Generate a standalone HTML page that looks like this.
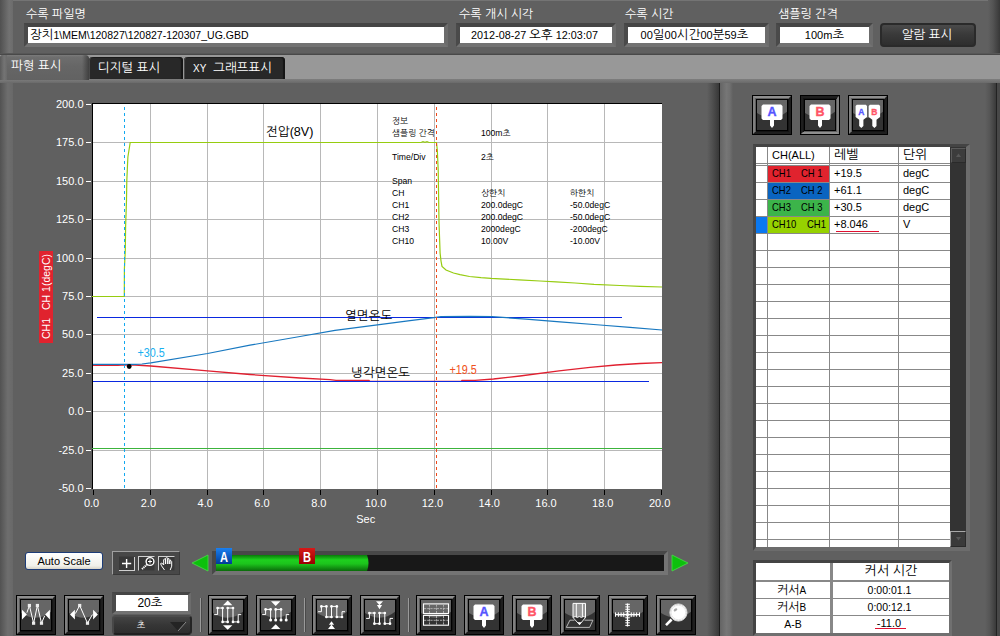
<!DOCTYPE html>
<html><head><meta charset="utf-8"><title>파형 표시</title>
<style>
html,body{margin:0;padding:0;background:#606060;}
body{width:1000px;height:636px;position:relative;overflow:hidden;font-family:"Liberation Sans","NanumGothic",sans-serif;font-size:12px;color:#fff;}
.abs{position:absolute;}
.t11{font-size:11px;line-height:13px;white-space:nowrap;}
.nar{font-size:10.5px;transform:scaleX(0.9);transform-origin:0 0;}
.t12{font-size:12px;line-height:14px;white-space:nowrap;}
.lbl{position:absolute;font-size:12px;line-height:14px;white-space:nowrap;color:#fff;}
.inset{position:absolute;box-sizing:border-box;background:#fff;border-style:solid;border-width:4px;border-color:#454545 #6c6c6c #727272 #4a4a4a;color:#000;font-size:11px;line-height:17px;white-space:nowrap;overflow:hidden;}
.btn{position:absolute;width:40px;height:40px;box-sizing:border-box;border:1px solid #000;background:#000;}
.btn:before{content:"";position:absolute;left:0;top:0;width:38px;height:38px;box-sizing:border-box;border-style:solid;border-width:2px;border-color:#8e8e8e #1e1e1e #1e1e1e #808080;box-shadow:inset 1px 1px 0 #5e5e5e, inset -1px -1px 0 #141414;}
.btn.pressed:before{border-color:#1e1e1e #808080 #8e8e8e #1e1e1e;box-shadow:inset 1px 1px 0 #141414, inset -1px -1px 0 #5e5e5e;}
.btn .face{position:absolute;left:4px;top:4px;}
.k{font-size:12.5px;}
.sep{position:absolute;width:2px;height:34px;top:598px;background:linear-gradient(90deg,#9a9a9a 0 50%,#4a4a4a 50% 100%);}
</style></head><body>
<!-- top bar -->
<div class="abs" style="left:0;top:0;width:1000px;height:55px;background:linear-gradient(#606060 52px,#4e4e4e 53px,#3a3a3a 55px);border-top:1px solid #747474;box-sizing:border-box"></div>
<div class="abs" style="left:0;top:0;width:13px;height:53px;background:linear-gradient(90deg,#505050,#727272 70%,#6c6c6c)"></div>
<div class="abs" style="left:988px;top:0;width:12px;height:53px;background:linear-gradient(90deg,#606060,#545454 40%,#383838)"></div>
<div class="lbl" style="left:26px;top:7px">수록 파일명</div>
<div class="inset" style="left:24px;top:23px;width:424px;height:24px;padding-left:2px;font-size:10.5px"><span class="k">장치</span>1\MEM\120827\120827-120307_UG.GBD</div>
<div class="lbl" style="left:459px;top:7px">수록 개시 시각</div>
<div class="inset" style="left:456px;top:23px;width:160px;height:24px;text-align:center;padding-right:3px;font-size:10.8px">2012-08-27 <span class="k">오후</span> 12:03:07</div>
<div class="lbl" style="left:625px;top:7px">수록 시간</div>
<div class="inset" style="left:624px;top:23px;width:145px;height:24px;text-align:center;padding-right:4px">00<span class="k">일</span>00<span class="k">시간</span>00<span class="k">분</span>59<span class="k">초</span></div>
<div class="lbl" style="left:778px;top:7px">샘플링 간격</div>
<div class="inset" style="left:776px;top:23px;width:97px;height:24px;text-align:center">100m<span class="k">초</span></div>
<div class="abs" style="left:880px;top:23px;width:96px;height:24px;box-sizing:border-box;background:linear-gradient(#4a4a4a,#3a3a3a 45%,#2e2e2e);border:2px solid #2a2a2a;border-radius:4px;text-align:center;font-size:12.5px;line-height:20px;padding-right:2px">알람 표시</div>
<!-- tab strip -->
<div class="abs" style="left:0;top:55px;width:1000px;height:24px;background:#989898"></div>
<div class="abs" style="left:0;top:79px;width:1000px;height:4px;background:linear-gradient(#7e7e7e,#6a6a6a)"></div>
<div class="abs" style="left:0;top:55px;width:89px;height:25px;background:linear-gradient(#7c7c7c,#6e6e6e 2px,#666 45%,#626262);border-radius:3px 4px 0 0"></div><div class="abs" style="left:0;top:55px;width:7px;height:25px;background:linear-gradient(90deg,#5a5a5a,#747474 60%,#6a6a6a);border-radius:3px 0 0 0"></div><div class="abs" style="left:82px;top:55px;width:7px;height:25px;background:linear-gradient(90deg,rgba(70,70,70,0),rgba(60,60,60,0.9));border-radius:0 4px 0 0"></div>
<div class="lbl" style="left:11px;top:59px;font-size:12.5px">파형 표시</div>
<div class="abs" style="left:89px;top:57px;width:94px;height:22px;background:#282828;border-radius:4px 4px 0 0;box-shadow:inset 1px 0 0 #4a4a4a, inset 0 1px 0 #1a1a1a, inset -2px 0 1px #141414"></div>
<div class="lbl" style="left:98px;top:61px;font-size:12.5px">디지털 표시</div>
<div class="abs" style="left:184px;top:57px;width:101px;height:22px;background:#282828;border-radius:4px 4px 0 0;box-shadow:inset 1px 0 0 #4a4a4a, inset 0 1px 0 #1a1a1a, inset -2px 0 1px #141414"></div>
<div class="lbl" style="left:193px;top:61px;font-size:12.5px"><span style="font-size:10px">XY</span>&nbsp; 그래프표시</div>
<!-- main panels -->
<div class="abs" style="left:0;top:83px;width:720px;height:553px;background:#606060"></div>
<div class="abs" style="left:0;top:83px;width:13px;height:553px;background:linear-gradient(90deg,#525252,#6e6e6e 60%,#686868)"></div>
<div class="abs" style="left:707px;top:83px;width:13px;height:553px;background:linear-gradient(90deg,#606060,#505050 40%,#383838 92%,#1c1c1c 93%)"></div>
<div class="abs" style="left:720px;top:83px;width:280px;height:553px;background:#606060"></div>
<div class="abs" style="left:720px;top:83px;width:13px;height:553px;background:linear-gradient(90deg,#646464,#767676 50%,#707070 75%,#606060)"></div>
<div class="abs" style="left:985px;top:83px;width:15px;height:553px;background:linear-gradient(90deg,#606060,#565656 30%,#3a3a3a 73%,#222 74%,#222 80%,#484848 81%)"></div>
<svg class="abs" style="left:0;top:0" width="720" height="540" viewBox="0 0 720 540" font-family="Liberation Sans, NanumGothic, sans-serif" font-size="11" fill="#fff">
<rect x="92" y="103" width="570" height="386" fill="#fff"/>
<path d="M150.5,104V489M207.5,104V489M263.5,104V489M320.5,104V489M377.5,104V489M434.5,104V489M491.5,104V489M547.5,104V489M604.5,104V489M93,142.5H662M93,181.5H662M93,219.5H662M93,258.5H662M93,296.5H662M93,334.5H662M93,373.5H662M93,411.5H662M93,450.5H662" stroke="#b8b8b8" stroke-width="1" fill="none"/>
<path d="M92.5,103V489M92,103.5H662" stroke="#000" stroke-width="1" fill="none"/>
<text x="83.5" y="108.0" text-anchor="end">200.0</text><path d="M86,104.5H91" stroke="#fff" stroke-width="1"/><text x="83.5" y="146.4" text-anchor="end">175.0</text><path d="M86,142.5H91" stroke="#fff" stroke-width="1"/><text x="83.5" y="184.8" text-anchor="end">150.0</text><path d="M86,181.5H91" stroke="#fff" stroke-width="1"/><text x="83.5" y="223.2" text-anchor="end">125.0</text><path d="M86,219.5H91" stroke="#fff" stroke-width="1"/><text x="83.5" y="261.6" text-anchor="end">100.0</text><path d="M86,258.5H91" stroke="#fff" stroke-width="1"/><text x="83.5" y="300.0" text-anchor="end">75.0</text><path d="M86,296.5H91" stroke="#fff" stroke-width="1"/><text x="83.5" y="338.4" text-anchor="end">50.0</text><path d="M86,334.5H91" stroke="#fff" stroke-width="1"/><text x="83.5" y="376.8" text-anchor="end">25.0</text><path d="M86,373.5H91" stroke="#fff" stroke-width="1"/><text x="83.5" y="415.2" text-anchor="end">0.0</text><path d="M86,411.5H91" stroke="#fff" stroke-width="1"/><text x="83.5" y="453.6" text-anchor="end">-25.0</text><path d="M86,450.5H91" stroke="#fff" stroke-width="1"/><text x="83.5" y="492.0" text-anchor="end">-50.0</text><path d="M86,488.5H91" stroke="#fff" stroke-width="1"/>
<text x="91.6" y="507" text-anchor="middle">0.0</text><path d="M93.5,490V495" stroke="#000" stroke-width="1"/><text x="148.4" y="507" text-anchor="middle">2.0</text><path d="M150.5,490V495" stroke="#000" stroke-width="1"/><text x="205.2" y="507" text-anchor="middle">4.0</text><path d="M207.5,490V495" stroke="#000" stroke-width="1"/><text x="262.0" y="507" text-anchor="middle">6.0</text><path d="M263.5,490V495" stroke="#000" stroke-width="1"/><text x="318.8" y="507" text-anchor="middle">8.0</text><path d="M320.5,490V495" stroke="#000" stroke-width="1"/><text x="375.6" y="507" text-anchor="middle">10.0</text><path d="M377.5,490V495" stroke="#000" stroke-width="1"/><text x="432.4" y="507" text-anchor="middle">12.0</text><path d="M434.5,490V495" stroke="#000" stroke-width="1"/><text x="489.2" y="507" text-anchor="middle">14.0</text><path d="M491.5,490V495" stroke="#000" stroke-width="1"/><text x="546.0" y="507" text-anchor="middle">16.0</text><path d="M547.5,490V495" stroke="#000" stroke-width="1"/><text x="602.8" y="507" text-anchor="middle">18.0</text><path d="M604.5,490V495" stroke="#000" stroke-width="1"/><text x="659.6" y="507" text-anchor="middle">20.0</text><path d="M661.5,490V495" stroke="#000" stroke-width="1"/>
<text x="365.7" y="523" text-anchor="middle">Sec</text>
<rect x="39" y="251" width="14" height="92" fill="#e0232e"/>
<text transform="translate(50,339) rotate(-90)" font-size="10.5">CH1</text><text transform="translate(50,310) rotate(-90)" font-size="10.5">CH 1(degC)</text>
<path d="M92,448.5H662" stroke="#3cb43c" stroke-width="1.2" fill="none"/>
<polyline points="93,365.4 118,365.4 124.5,364.8 135,365 150.8,366 207.6,370.8 250,374.5 300,378 330,379.6 336,380.4 369,380.4 370,381.4 461,381.4 462,380.4 475,380.3 493.5,379 520,376 559,370.8 590,367.3 616,365 640,363.5 662,362.6" fill="none" stroke="#e02030" stroke-width="1.3"/>
<path d="M97,317.5H622M93,381.5H649" stroke="#0a28e0" stroke-width="1.2" fill="none"/>
<polyline points="93,364.4 135,364.4 142,364 150.8,362.8 207.6,353.5 250,345.2 300,336.5 335,330.4 377.4,324.8 410,320.7 434,317.6 441,316.6 470,316.3 492,316.6 526,319.2 560,321.9 600,325 630,327.4 662,330" fill="none" stroke="#1878c0" stroke-width="1.2"/>
<polyline points="92,296.5 124.3,296.5 124.4,269 125.3,250 125.6,227 126.5,200 126.8,181 127.5,165 127.9,157 129,150 130.2,142.5 421,142.5 423,141.7 425,142.3 427,141.7 429,142.5 436.5,142.5 437.3,150 438.2,170 439,222 440.1,253 441,261 442,266.4 446,270 453.5,273 460,274.6 469.5,276.5 481,277.7 491,278.4 500,278.8 519,279.9 540,281 556,281.8 575,283 594,284.4 620,285.5 640,286.3 662,287" fill="none" stroke="#96cc10" stroke-width="1.2"/>
<path d="M124.5,107V489" stroke="#10a8f0" stroke-width="1" stroke-dasharray="3 3" fill="none"/>
<path d="M436.5,107V489" stroke="#f04818" stroke-width="1" stroke-dasharray="3 3" fill="none"/>
<circle cx="129.2" cy="366.5" r="2.4" fill="#000"/>
<g fill="#000" font-size="12.6">
<text x="266" y="136">전압(8V)</text>
<text x="345" y="320">열면온도</text>
<text x="351" y="377">냉각면온도</text>
</g>
<text transform="translate(137.5,356.5) scale(0.8,1)" fill="#18b0f0" font-size="13.5">+30.5</text>
<text transform="translate(449.5,374) scale(0.8,1)" fill="#f05020" font-size="13.5">+19.5</text>
<g fill="#000" font-size="8.6">
<text x="392" y="123.5">정보</text>
<text x="392" y="136">샘플링 간격</text><text x="481" y="136">100m초</text>
<text x="392" y="160">Time/Div</text><text x="481" y="160">2초</text>
<text x="392" y="184">Span</text>
<text x="392" y="196">CH</text><text x="481" y="196">상한치</text><text x="570" y="196">하한치</text>
<text x="392" y="208">CH1</text><text x="481" y="208">200.0degC</text><text x="570" y="208">-50.0degC</text>
<text x="392" y="220">CH2</text><text x="481" y="220">200.0degC</text><text x="570" y="220">-50.0degC</text>
<text x="392" y="232">CH3</text><text x="481" y="232">2000degC</text><text x="570" y="232">-200degC</text>
<text x="392" y="244">CH10</text><text x="481" y="244">10.00V</text><text x="570" y="244">-10.00V</text>
</g>
</svg>
<!-- auto scale row -->
<div class="abs" style="left:25px;top:552px;width:78px;height:18px;box-sizing:border-box;border:1px solid #1c3c78;border-radius:3px;background:linear-gradient(#ffffff,#f0f0ea 80%,#d8d4c8);color:#000;font-size:11px;line-height:16px;text-align:center">Auto Scale</div>
<div class="abs" style="left:112px;top:551px;width:68px;height:24px;box-sizing:border-box;background:#484848;border:1px solid;border-color:#a0a0a0 #3a3a3a #3a3a3a #a0a0a0"></div>
<svg class="abs" style="left:112px;top:551px" width="68" height="24" viewBox="0 0 68 24" fill="none">
<rect x="7" y="5.500" width="16" height="14.500" fill="#383838"/><path d="M7,19.500H23M22.500,6V20" stroke="#d0d0d0" stroke-width="1"/>
<path d="M14.600,8V17M10,12.500H19.200" stroke="#fff" stroke-width="1.400"/>
<rect x="26" y="5" width="16.500" height="14.500" fill="#383838"/><path d="M26,5.500H42.500M26.500,5V19.500" stroke="#d0d0d0" stroke-width="1"/>
<path d="M35.200,13.400L29.800,18.200" stroke="#fff" stroke-width="2" stroke-dasharray="1.300 0.600"/>
<circle cx="38" cy="10.500" r="3.900" fill="#2c2c2c" stroke="#fff" stroke-width="1.400"/><path d="M36,10.500H40M38,8.500V12.500" stroke="#fff" stroke-width="1"/>
<rect x="46" y="5" width="16.500" height="14.500" fill="#383838"/><path d="M46,5.500H62.500M46.500,5V19.500" stroke="#d0d0d0" stroke-width="1"/>
<path d="M52.500,19L49.500,14.800L48.600,12.600L49.800,12L51.700,14V8.600L52.800,8L53.600,8.600V13V7.200L54.800,6.600L55.800,7.200V13V8L57,7.600L57.800,8.400V13V9.800L59,9.600L59.700,10.600V15.200L58.200,19" stroke="#fff" stroke-width="1" stroke-linejoin="round"/>
</svg>
<!-- scrollbar -->
<svg class="abs" style="left:188px;top:544px" width="510" height="36" viewBox="188 544 510 36">
<defs><linearGradient id="gg" x1="0" y1="0" x2="0" y2="1"><stop offset="0" stop-color="#0a7a0a"/><stop offset="0.3" stop-color="#1ed01e"/><stop offset="0.55" stop-color="#1cc41c"/><stop offset="1" stop-color="#0a6a0a"/></linearGradient>
<linearGradient id="gb" x1="0" y1="0" x2="0" y2="1"><stop offset="0" stop-color="#1a80f0"/><stop offset="1" stop-color="#003c98"/></linearGradient>
<linearGradient id="gr" x1="0" y1="0" x2="0" y2="1"><stop offset="0" stop-color="#d81818"/><stop offset="1" stop-color="#980000"/></linearGradient></defs>
<path d="M192,563L208,555V571Z" fill="#0cc00c" stroke="#48dc48" stroke-width="0.8"/>
<path d="M688,563L672,555V571Z" fill="#0cc00c" stroke="#48dc48" stroke-width="0.8"/>
<path d="M212,551H668L664,555H216V571L212,575Z" fill="#484848"/>
<path d="M668,551V575H212L216,571H664V555Z" fill="#747474"/>
<rect x="216" y="555" width="448" height="16" fill="#181818"/>
<path d="M216,555H367Q370,563 367,571H216Z" fill="url(#gg)"/>
<rect x="216" y="548" width="16" height="16" fill="url(#gb)"/>
<text transform="translate(224,561.8) scale(0.74,1)" font-family="Liberation Sans, sans-serif" font-weight="bold" font-size="15" text-anchor="middle" fill="#fff">A</text>
<rect x="299" y="548" width="16" height="16" fill="url(#gr)"/>
<text transform="translate(307,561.8) scale(0.74,1)" font-family="Liberation Sans, sans-serif" font-weight="bold" font-size="15" text-anchor="middle" fill="#fff">B</text>
</svg>
<!-- bottom toolbar -->
<div class="btn" style="left:16px;top:595px"><svg class="face" width="30" height="30" viewBox="0 0 30 30"><rect width="30" height="30" fill="#333"/><path d="M0,0H30V11.700Q16,23 0,13Z" fill="#666"/><path d="M1,9.800L5.900,14.600L1,19.400Z M28.900,9.800L24.100,14.600L28.900,19.400Z" fill="#fff"/><polyline points="5.900,12.700 8.400,5.500 12.600,23.200 16.400,5.500 20.500,23.200 23.600,16" fill="none" stroke="#fff" stroke-width="1"/><rect x="6.800000000000001" y="3.9" width="3.2" height="3.2" fill="#ececec"/><rect x="14.799999999999999" y="3.9" width="3.2" height="3.2" fill="#ececec"/><rect x="11.0" y="21.599999999999998" width="3.2" height="3.2" fill="#ececec"/><rect x="18.9" y="21.599999999999998" width="3.2" height="3.2" fill="#ececec"/></svg></div>
<div class="btn" style="left:64px;top:595px"><svg class="face" width="30" height="30" viewBox="0 0 30 30"><rect width="30" height="30" fill="#333"/><path d="M0,0H30V11.700Q16,23 0,13Z" fill="#666"/><path d="M1,14.600L5.900,9.800V19.400Z M28.900,14.600L24.100,9.800V19.400Z" fill="#fff"/><polyline points="6.300,13.600 10.700,5.500 18.500,23.200 23.400,14.600" fill="none" stroke="#fff" stroke-width="1"/><rect x="9.1" y="3.9" width="3.2" height="3.2" fill="#ececec"/><rect x="16.9" y="21.599999999999998" width="3.2" height="3.2" fill="#ececec"/></svg></div>
<div class="inset" style="left:112px;top:592px;width:79px;height:22px;border-width:3px 3px 3px 4px;text-align:center;font-size:12px;line-height:17px;padding-right:4px">20<span class="k">초</span></div>
<div class="abs" style="left:112px;top:615px;width:80px;height:20px;box-sizing:border-box;background:linear-gradient(#444,#363636 50%,#2e2e2e);border:2px solid;border-color:#4c4c4c #242424 #202020 #484848;border-radius:4px;text-align:center;font-size:9px;line-height:16px;padding-right:22px">초</div>
<svg class="abs" style="left:168px;top:620px" width="20" height="12" viewBox="0 0 20 12"><path d="M2,2H18L10,11Z" fill="#242424"/><path d="M18,2L10,11" stroke="#8a8a8a" stroke-width="1"/></svg>
<div class="sep" style="left:200px"></div>
<div class="btn" style="left:208px;top:595px"><svg class="face" width="30" height="30" viewBox="0 0 30 30"><rect width="30" height="30" fill="#333"/><path d="M0,0H30V11.700Q16,23 0,13Z" fill="#666"/><path d="M14.700,0.500L19.400,5.200H10Z M14.700,29.800L19.400,25.200H10Z" fill="#fff"/><path d="M1.200,14.600H4.600V8H9.600V21.900H14.700V8H20V21.900H25.200V14.600H28.200" fill="none" stroke="#fff" stroke-width="1"/><circle cx="4.6" cy="8" r="1.35" fill="#fff"/><circle cx="9.6" cy="8" r="1.35" fill="#fff"/><circle cx="14.7" cy="8" r="1.35" fill="#fff"/><circle cx="20" cy="8" r="1.35" fill="#fff"/><circle cx="9.6" cy="21.9" r="1.35" fill="#fff"/><circle cx="14.7" cy="21.9" r="1.35" fill="#fff"/><circle cx="20" cy="21.9" r="1.35" fill="#fff"/><circle cx="25.2" cy="21.9" r="1.35" fill="#fff"/></svg></div>
<div class="btn" style="left:256px;top:595px"><svg class="face" width="30" height="30" viewBox="0 0 30 30"><rect width="30" height="30" fill="#333"/><path d="M0,0H30V11.700Q16,23 0,13Z" fill="#666"/><path d="M14.700,6L19.400,1.200H10Z M14.700,24.300L19.400,29H10Z" fill="#fff"/><path d="M1.200,14.600H4.600V9.400H9.600V20M14.700,20V9.400H20V20M25.200,20V14.600H28.200" fill="none" stroke="#fff" stroke-width="1"/><circle cx="4.6" cy="9.4" r="1.35" fill="#fff"/><circle cx="9.6" cy="9.4" r="1.35" fill="#fff"/><circle cx="14.7" cy="9.4" r="1.35" fill="#fff"/><circle cx="20" cy="9.4" r="1.35" fill="#fff"/><circle cx="9.6" cy="20" r="1.5" fill="#fff"/><circle cx="14.7" cy="20" r="1.5" fill="#fff"/><circle cx="20" cy="20" r="1.5" fill="#fff"/><circle cx="25.2" cy="20" r="1.5" fill="#fff"/></svg></div>
<div class="sep" style="left:304px"></div>
<div class="btn" style="left:312px;top:595px"><svg class="face" width="30" height="30" viewBox="0 0 30 30"><rect width="30" height="30" fill="#333"/><path d="M0,0H30V11.700Q16,23 0,13Z" fill="#666"/><path d="M14.500,21.300L17.100,24.700H11.900Z M14.500,24.500L18,29H11Z" fill="#fff"/><path d="M1.100,11.700H4.400V6.400H9.400V17H14.500V6.400H19.800V17H25V11.700H28" fill="none" stroke="#fff" stroke-width="1"/><circle cx="4.4" cy="6.4" r="1.35" fill="#fff"/><circle cx="9.4" cy="6.4" r="1.35" fill="#fff"/><circle cx="14.5" cy="6.4" r="1.35" fill="#fff"/><circle cx="19.8" cy="6.4" r="1.35" fill="#fff"/><circle cx="9.4" cy="17" r="1.35" fill="#fff"/><circle cx="14.5" cy="17" r="1.35" fill="#fff"/><circle cx="19.8" cy="17" r="1.35" fill="#fff"/><circle cx="25" cy="17" r="1.35" fill="#fff"/></svg></div>
<div class="btn" style="left:360px;top:595px"><svg class="face" width="30" height="30" viewBox="0 0 30 30"><rect width="30" height="30" fill="#333"/><path d="M0,0H30V11.700Q16,23 0,13Z" fill="#666"/><path d="M14.500,5.200L18,1.200H11Z M14.500,9.300L17.100,5H11.900Z" fill="#fff"/><path d="M1.100,18.400H4.400V13H9.400V23.700H14.500V13H19.800V23.700H25V18.400H28" fill="none" stroke="#fff" stroke-width="1"/><circle cx="4.4" cy="13" r="1.35" fill="#fff"/><circle cx="9.4" cy="13" r="1.35" fill="#fff"/><circle cx="14.5" cy="13" r="1.35" fill="#fff"/><circle cx="19.8" cy="13" r="1.35" fill="#fff"/><circle cx="9.4" cy="23.7" r="1.35" fill="#fff"/><circle cx="14.5" cy="23.7" r="1.35" fill="#fff"/><circle cx="19.8" cy="23.7" r="1.35" fill="#fff"/><circle cx="25" cy="23.7" r="1.35" fill="#fff"/></svg></div>
<div class="sep" style="left:408px"></div>
<div class="btn" style="left:416px;top:595px"><svg class="face" width="30" height="30" viewBox="0 0 30 30"><rect width="30" height="30" fill="#333"/><path d="M0,0H30V11.700Q16,23 0,13Z" fill="#666"/><rect x="2.500" y="3.900" width="25" height="9.600" fill="none" stroke="#fff" stroke-width="1.1"/><rect x="2.500" y="15.400" width="25" height="9.800" fill="none" stroke="#fff" stroke-width="1.1"/><path d="M3,8.600H27M3,20.300H27M8.500,4.500V13M15.500,4.500V13M22.500,4.500V13M8.500,16V25M15.500,16V25M22.500,16V25" stroke="#b4b4b4" stroke-width="0.9" stroke-dasharray="2.2 1" fill="none"/></svg></div>
<div class="btn" style="left:464px;top:595px"><svg class="face" width="30" height="30" viewBox="0 0 30 30"><rect width="30" height="30" fill="#333"/><path d="M0,0H30V11.700Q16,23 0,13Z" fill="#666"/><path d="M6.0,4.500H24.0L25.5,6V18.500L24.0,20H17.0V25.500L15.0,28L13.0,25.500V20H6.0L4.5,18.500V6Z" fill="#fff"/><text x="15.0" y="16" font-family="Liberation Sans, sans-serif" font-weight="bold" font-size="12.5" text-anchor="middle" fill="#5555ff" stroke="#5555ff" stroke-width="0.350">A</text></svg></div>
<div class="btn" style="left:512px;top:595px"><svg class="face" width="30" height="30" viewBox="0 0 30 30"><rect width="30" height="30" fill="#333"/><path d="M0,0H30V11.700Q16,23 0,13Z" fill="#666"/><path d="M6.0,4.500H24.0L25.5,6V18.500L24.0,20H17.0V25.500L15.0,28L13.0,25.500V20H6.0L4.5,18.500V6Z" fill="#fff"/><text x="15.0" y="16" font-family="Liberation Sans, sans-serif" font-weight="bold" font-size="12.5" text-anchor="middle" fill="#ff5566" stroke="#ff5566" stroke-width="0.350">B</text></svg></div>
<div class="btn" style="left:560px;top:595px"><svg class="face" width="30" height="30" viewBox="0 0 30 30"><rect width="30" height="30" fill="#333"/><path d="M0,0H30V11.700Q16,23 0,13Z" fill="#666"/><rect x="8" y="3.400" width="12.500" height="14" fill="#9a9a9a"/><path d="M8,17.500V3.400H20.500V17.500M11.300,3.400V17.500M17.400,3.400V17.500" fill="none" stroke="#fff" stroke-width="1"/><path d="M8,17.500L14.500,24.700L20.500,17.500L18.400,16.500L16.400,17.500L14.300,16.500L12.200,17.500L10.100,16.500Z" fill="#2c2c2c" stroke="#fff" stroke-width="0.9"/><path d="M12.400,22.300H16.600L14.500,24.900Z" fill="#fff"/><path d="M9.500,20.200H4.900L1.300,27.400H24.600L27.900,20.200H19.500" fill="none" stroke="#c4c4c4" stroke-width="0.9"/></svg></div>
<div class="btn" style="left:608px;top:595px"><svg class="face" width="30" height="30" viewBox="0 0 30 30"><rect width="30" height="30" fill="#333"/><path d="M0,0H30V11.700Q16,23 0,13Z" fill="#666"/><path d="M14.500,3.400V26.600M2,14.600H27" stroke="#fff" stroke-width="1.3" fill="none"/><path d="M12.300,4.300H16.900M12.300,6.900H16.900M12.300,9.300H16.900M12.300,11.700H16.900M12.300,17.800H16.900M12.300,20.400H16.900M12.300,22.800H16.900M12.300,25.400H16.900M2.500,12.400V16.800M5.400,12.400V16.800M8.100,12.400V16.800M10.700,12.400V16.800M18.300,12.400V16.800M20.900,12.400V16.800M23.600,12.400V16.800M26.500,12.400V16.800" stroke="#fff" stroke-width="1" fill="none"/><circle cx="14.500" cy="14.600" r="1.600" fill="#fff"/></svg></div>
<div class="btn" style="left:656px;top:595px"><svg class="face" width="30" height="30" viewBox="0 0 30 30"><rect width="30" height="30" fill="#333"/><path d="M0,0H30V11.700Q16,23 0,13Z" fill="#666"/><path d="M10.600,19.500L5,25.100" stroke="#fff" stroke-width="2.600" stroke-linecap="butt"/><circle cx="17.400" cy="12.500" r="8.600" fill="#fff" stroke="#d4d4d4" stroke-width="1"/><circle cx="17.400" cy="12.500" r="7.300" fill="none" stroke="#dcdcdc" stroke-width="0.7"/><ellipse cx="14.500" cy="9.800" rx="2" ry="1.300" transform="rotate(-35 14.500 9.800)" fill="#a8a8a8"/></svg></div>
<!-- right panel -->
<div class="btn" style="left:752px;top:95px"><svg class="face" width="30" height="30" viewBox="0 0 30 30"><rect width="30" height="30" fill="#333"/><path d="M0,0H30V11.700Q16,23 0,13Z" fill="#666"/><path d="M6.0,4.500H24.0L25.5,6V18.500L24.0,20H17.0V25.500L15.0,28L13.0,25.500V20H6.0L4.5,18.500V6Z" fill="#fff"/><text x="15.0" y="16" font-family="Liberation Sans, sans-serif" font-weight="bold" font-size="12.5" text-anchor="middle" fill="#5555ff" stroke="#5555ff" stroke-width="0.350">A</text></svg></div>
<div class="btn pressed" style="left:800px;top:95px"><svg class="face" width="30" height="30" viewBox="0 0 30 30"><rect width="30" height="30" fill="#333"/><path d="M0,0H30V11.700Q16,23 0,13Z" fill="#666"/><path d="M6.0,4.500H24.0L25.5,6V18.500L24.0,20H17.0V25.500L15.0,28L13.0,25.500V20H6.0L4.5,18.500V6Z" fill="#fff"/><text x="15.0" y="16" font-family="Liberation Sans, sans-serif" font-weight="bold" font-size="12.5" text-anchor="middle" fill="#ff5566" stroke="#ff5566" stroke-width="0.350">B</text></svg></div>
<div class="btn" style="left:848px;top:95px"><svg class="face" width="30" height="30" viewBox="0 0 30 30"><rect width="30" height="30" fill="#333"/><path d="M0,0H30V11.700Q16,23 0,13Z" fill="#666"/><path d="M3.8,4.700H12.8L14.0,5.900V17L10.4,19.800V26L8.3,27.900L6.200000000000001,26V19.800L2.6,17V5.900Z" fill="#fff"/><text x="8.3" y="14.800" font-family="Liberation Sans, sans-serif" font-weight="bold" font-size="8.500" text-anchor="middle" fill="#5555ff" stroke="#5555ff" stroke-width="0.300">A</text><path d="M16.9,4.700H25.900000000000002L27.1,5.900V17L23.5,19.800V26L21.4,27.900L19.299999999999997,26V19.800L15.7,17V5.900Z" fill="#fff"/><text x="21.4" y="14.800" font-family="Liberation Sans, sans-serif" font-weight="bold" font-size="8.500" text-anchor="middle" fill="#ff5566" stroke="#ff5566" stroke-width="0.300">B</text></svg></div>
<div class="abs" style="left:753px;top:144px;width:217px;height:407px;box-sizing:border-box;border-style:solid;border-width:3px 4px 4px 3px;border-color:#444 #6c6c6c #6c6c6c #484848;background:#fff"></div>
<div class="abs" style="left:950px;top:147px;width:16px;height:400px;background:#333"></div>
<div class="abs" style="left:951px;top:148px;width:15px;height:15px;box-sizing:border-box;background:#3c3c3c;border:1px solid;border-color:#5a5a5a #2a2a2a #2a2a2a #5a5a5a"></div>
<div class="abs" style="left:950px;top:531px;width:16px;height:16px;box-sizing:border-box;background:#3a3a3a;border:1px solid;border-color:#a8a8a8 #2a2a2a #2a2a2a #a8a8a8"></div>
<svg class="abs" style="left:951px;top:148px" width="15" height="400" viewBox="0 0 15 400"><path d="M5,9L7.500,5.500L10,9Z" fill="#585858"/><path d="M5,389L7.500,392.500L10,389Z" fill="#585858"/></svg>
<div class="abs" style="left:768px;top:166px;width:61px;height:16px;background:#e0232e"></div><div class="abs t11 nar" style="left:772px;top:167px;color:#000">CH1</div><div class="abs t11 nar" style="left:801px;top:167px;color:#000">CH 1</div><div class="abs t11" style="left:834px;top:167px;color:#000">+19.5</div><div class="abs t11" style="left:903px;top:167px;color:#000">degC</div><div class="abs" style="left:768px;top:183px;width:61px;height:16px;background:#0a64c0"></div><div class="abs t11 nar" style="left:772px;top:184px;color:#000">CH2</div><div class="abs t11 nar" style="left:801px;top:184px;color:#000">CH 2</div><div class="abs t11" style="left:834px;top:184px;color:#000">+61.1</div><div class="abs t11" style="left:903px;top:184px;color:#000">degC</div><div class="abs" style="left:768px;top:200px;width:61px;height:16px;background:#3cb44a"></div><div class="abs t11 nar" style="left:772px;top:201px;color:#000">CH3</div><div class="abs t11 nar" style="left:801px;top:201px;color:#000">CH 3</div><div class="abs t11" style="left:834px;top:201px;color:#000">+30.5</div><div class="abs t11" style="left:903px;top:201px;color:#000">degC</div><div class="abs" style="left:768px;top:217px;width:61px;height:16px;background:#96d200"></div><div class="abs t11 nar" style="left:772px;top:218px;color:#000">CH10</div><div class="abs t11 nar" style="left:807px;top:218px;color:#000">CH1</div><div class="abs t11" style="left:834px;top:218px;color:#000">+8.046</div><div class="abs t11" style="left:903px;top:218px;color:#000">V</div><div class="abs" style="left:756px;top:217px;width:11px;height:16px;background:#0a78f0"></div><div class="abs" style="left:836px;top:231px;width:43px;height:1px;background:#e01030"></div>
<div class="abs" style="left:756px;top:182px;width:194px;height:1px;background:#888"></div><div class="abs" style="left:756px;top:199px;width:194px;height:1px;background:#888"></div><div class="abs" style="left:756px;top:216px;width:194px;height:1px;background:#888"></div><div class="abs" style="left:756px;top:233px;width:194px;height:1px;background:#888"></div><div class="abs" style="left:756px;top:250px;width:194px;height:1px;background:#888"></div><div class="abs" style="left:756px;top:267px;width:194px;height:1px;background:#888"></div><div class="abs" style="left:756px;top:284px;width:194px;height:1px;background:#888"></div><div class="abs" style="left:756px;top:301px;width:194px;height:1px;background:#888"></div><div class="abs" style="left:756px;top:318px;width:194px;height:1px;background:#888"></div><div class="abs" style="left:756px;top:335px;width:194px;height:1px;background:#888"></div><div class="abs" style="left:756px;top:352px;width:194px;height:1px;background:#888"></div><div class="abs" style="left:756px;top:369px;width:194px;height:1px;background:#888"></div><div class="abs" style="left:756px;top:386px;width:194px;height:1px;background:#888"></div><div class="abs" style="left:756px;top:403px;width:194px;height:1px;background:#888"></div><div class="abs" style="left:756px;top:420px;width:194px;height:1px;background:#888"></div><div class="abs" style="left:756px;top:437px;width:194px;height:1px;background:#888"></div><div class="abs" style="left:756px;top:454px;width:194px;height:1px;background:#888"></div><div class="abs" style="left:756px;top:471px;width:194px;height:1px;background:#888"></div><div class="abs" style="left:756px;top:488px;width:194px;height:1px;background:#888"></div><div class="abs" style="left:756px;top:505px;width:194px;height:1px;background:#888"></div><div class="abs" style="left:756px;top:522px;width:194px;height:1px;background:#888"></div><div class="abs" style="left:756px;top:539px;width:194px;height:1px;background:#888"></div>
<div class="abs" style="left:756px;top:163px;width:194px;height:1px;background:#888"></div><div class="abs" style="left:756px;top:165px;width:194px;height:1px;background:#888"></div>
<div class="abs" style="left:767px;top:147px;width:1px;height:400px;background:#888"></div>
<div class="abs" style="left:829px;top:147px;width:1px;height:400px;background:#888"></div>
<div class="abs" style="left:898px;top:147px;width:1px;height:400px;background:#888"></div>
<div class="abs t11" style="left:772px;top:148px;color:#000;line-height:15px">CH(ALL)</div>
<div class="abs t12" style="left:834px;top:147px;color:#000;line-height:15px;font-size:13px">레벨</div>
<div class="abs t12" style="left:903px;top:147px;color:#000;line-height:15px;font-size:13px">단위</div>
<!-- cursor table -->
<div class="abs" style="left:753px;top:560px;width:199px;height:76px;box-sizing:border-box;border-style:solid;border-width:3px;border-color:#444 #707070 #707070 #444;background:#888"></div>
<div class="abs" style="left:756px;top:563px;width:74px;height:17px;background:#fff"></div>
<div class="abs" style="left:833px;top:563px;width:116px;height:17px;background:#fff;color:#000;text-align:center;font-size:13px;line-height:16px">커서 시간</div>
<div class="abs" style="left:756px;top:582px;width:74px;height:16px;background:#fff;color:#000;text-align:center;font-size:12px;line-height:16px;padding-right:3px;box-sizing:border-box">커서<span style="font-size:10px">A</span></div>
<div class="abs" style="left:833px;top:582px;width:116px;height:16px;background:#fff;color:#000;text-align:center;font-size:10.5px;line-height:16px;padding-right:3px;box-sizing:border-box">0:00:01.1</div>
<div class="abs" style="left:756px;top:599px;width:74px;height:16px;background:#fff;color:#000;text-align:center;font-size:12px;line-height:16px;padding-right:3px;box-sizing:border-box">커서<span style="font-size:10px">B</span></div>
<div class="abs" style="left:833px;top:599px;width:116px;height:16px;background:#fff;color:#000;text-align:center;font-size:10.5px;line-height:16px;padding-right:3px;box-sizing:border-box">0:00:12.1</div>
<div class="abs" style="left:756px;top:616px;width:74px;height:17px;background:#fff;color:#000;text-align:center;font-size:10.5px;line-height:16px">A-B</div>
<div class="abs" style="left:833px;top:616px;width:116px;height:17px;background:#fff;color:#000;text-align:center;font-size:11px;line-height:15px;padding-right:4px;box-sizing:border-box">-11.0</div>
<div class="abs" style="left:875px;top:628px;width:31px;height:1px;background:#e01030"></div>
</body></html>
